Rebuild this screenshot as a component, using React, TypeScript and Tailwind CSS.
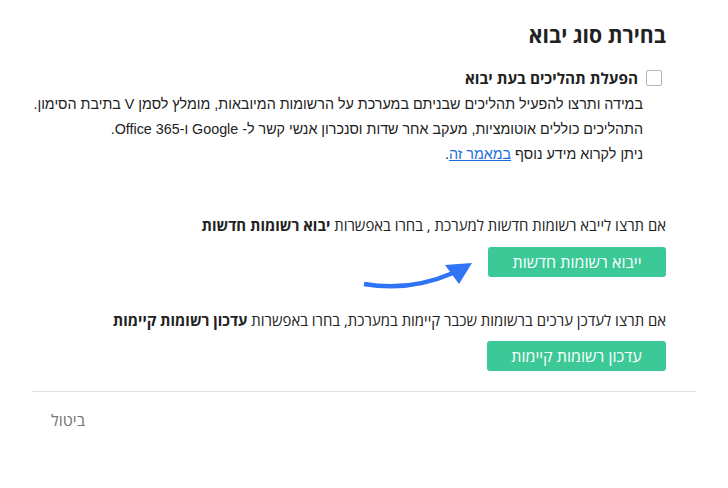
import React from "react";

export default function App() {
  const sans = { fontFamily: '"Open Sans", "Liberation Sans", sans-serif' };
  const arial = { fontFamily: '"Liberation Sans", Arial, sans-serif' };
  return (
    <div dir="rtl" className="w-[728px] h-[488px] bg-white px-[32px] text-[#333]" style={sans}>
      <div className="pr-[30px]">
        <h1 className="pt-[20px] text-[21.2px] leading-[29px] font-bold text-[#222]">בחירת סוג יבוא</h1>
        <div className="mt-[19px] flex items-center h-[20px]">
          <div className="mr-[4px] w-[16px] h-[16px] border border-[#b5b5b5] rounded-[2px] bg-white shrink-0" />
          <span className="mr-[8px] text-[15.3px] font-bold text-[#222]">הפעלת תהליכים בעת יבוא</span>
        </div>
        <div className="mt-[4px] mr-[23px] text-[14.3px] leading-[25px] text-[#222]" style={arial}>
          <div>במידה ותרצו להפעיל תהליכים שבניתם במערכת על הרשומות המיובאות, מומלץ לסמן V בתיבת הסימון.</div>
          <div>התהליכים כוללים אוטומציות, מעקב אחר שדות וסנכרון אנשי קשר ל- Google ו-Office 365.</div>
          <div>
            ניתן לקרוא מידע נוסף <a href="#" className="text-[#1a6fe0] underline">במאמר זה</a>.
          </div>
        </div>
        <div className="mt-[48px] text-[14.9px] leading-[20px] text-[#222]">
          אם תרצו לייבא רשומות חדשות למערכת , בחרו באפשרות <b>יבוא רשומות חדשות</b>
        </div>
        <div className="mt-[12px] flex items-start h-[30px]">
          <button className="w-[178px] h-[30px] rounded-[3px] bg-[#3cc997] text-white text-[16px] shrink-0">ייבוא רשומות חדשות</button>
          <svg width="125" height="36" viewBox="0 0 125 36" className="mt-[8px] mr-[6px] shrink-0">
            <path d="M7 29 Q 52 37 96 18" fill="none" stroke="#2f73f6" strokeWidth="4.5" />
            <polygon points="88,10 115,8 102,29" fill="#2f73f6" />
          </svg>
        </div>
        <div className="mt-[33px] text-[14.9px] leading-[20px] text-[#222]">
          אם תרצו לעדכן ערכים ברשומות שכבר קיימות במערכת, בחרו באפשרות <b>עדכון רשומות קיימות</b>
        </div>
        <div className="mt-[11px] flex">
          <button className="w-[179px] h-[30px] rounded-[3px] bg-[#3cc997] text-white text-[16px]">עדכון רשומות קיימות</button>
        </div>
      </div>
      <div className="mt-[20px] h-px bg-[#e3e3e3]" />
      <div className="mt-[18px] flex justify-end pl-[19px]">
        <span className="text-[16px] leading-[20px] text-[#777]">ביטול</span>
      </div>
    </div>
  );
}
